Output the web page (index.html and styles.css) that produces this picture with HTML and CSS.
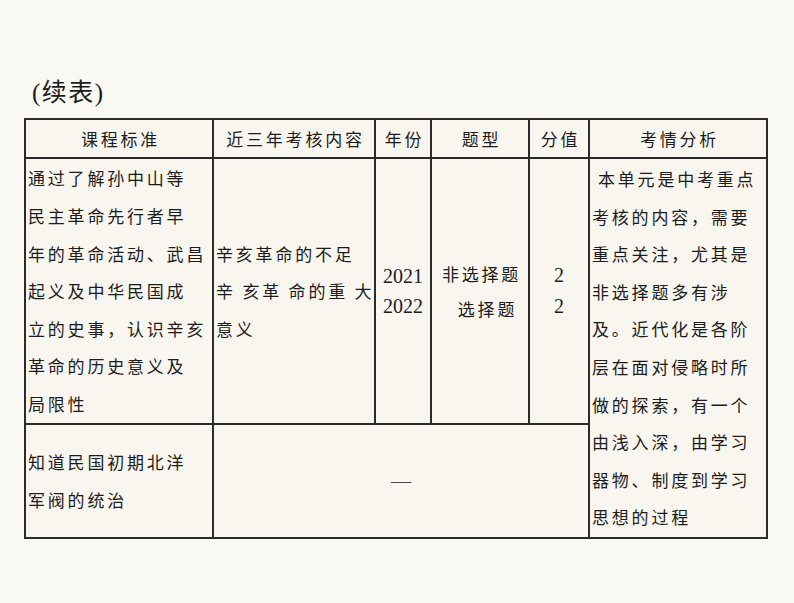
FILE: index.html
```html
<!DOCTYPE html>
<html lang="zh-CN">
<head>
<meta charset="utf-8">
<title>续表</title>
<link rel="stylesheet" href="styles.css">
</head>
<body>
<div class="page">
  <div class="title">(续表)</div>
  <table class="grid">
    <colgroup>
      <col class="c1"><col class="c2"><col class="c3"><col class="c4"><col class="c5"><col class="c6">
    </colgroup>
    <thead>
      <tr class="head">
        <th>课程标准</th>
        <th>近三年考核内容</th>
        <th>年份</th>
        <th>题型</th>
        <th>分值</th>
        <th>考情分析</th>
      </tr>
    </thead>
    <tbody>
      <tr class="row1">
        <td class="txt">通过了解孙中山等<br>民主革命先行者早<br>年的革命活动、武昌<br>起义及中华民国成<br>立的史事，认识辛亥<br>革命的历史意义及<br>局限性</td>
        <td class="txt">辛亥革命的不足<br>辛 亥革 命的重 大<br>意义</td>
        <td class="num">2021<br>2022</td>
        <td class="type"><span>非选择题</span><span class="shift">选择题</span></td>
        <td class="num score">2<br>2</td>
        <td class="txt analysis" rowspan="2"><span class="indent">本单元是中考重点</span><br>考核的内容，需要<br>重点关注，尤其是<br>非选择题多有涉<br>及。近代化是各阶<br>层在面对侵略时所<br>做的探索，有一个<br>由浅入深，由学习<br>器物、制度到学习<br>思想的过程</td>
      </tr>
      <tr class="row2">
        <td class="txt">知道民国初期北洋<br>军阀的统治</td>
        <td class="dash" colspan="4">—</td>
      </tr>
    </tbody>
  </table>
</div>
</body>
</html>
```

FILE: styles.css
```css
html, body {
  margin: 0;
  padding: 0;
  background: #faf8f2;
}

body {
  color: #1c1c1c;
  font-family: "Noto Sans CJK SC", "Liberation Serif", serif;
}

.page {
  padding: 77px 0 0 24px;
}

.title {
  font-family: "Liberation Serif", "Noto Sans CJK SC", serif;
  font-size: 25px;
  line-height: 32px;
  height: 32px;
  padding-left: 8px;
  letter-spacing: 1.5px;
  margin-bottom: 9px;
}

.grid {
  border-collapse: collapse;
  table-layout: fixed;
  width: 744px;
  background: #f8f6ef;
}

.c1 { width: 188px; }
.c2 { width: 162px; }
.c3 { width: 56px; }
.c4 { width: 98px; }
.c5 { width: 60px; }
.c6 { width: 178px; }

.grid th,
.grid td {
  border: 2px solid #2b2b2b;
  padding: 0 2px;
  font-size: 17px;
  font-weight: 400;
  letter-spacing: 2.8px;
  vertical-align: middle;
}

.head th {
  height: 37px;
  text-align: center;
  line-height: 35px;
  padding-left: 5px;
}

.row1 td { height: 264px; }
.row2 td { height: 112px; }

.txt {
  text-align: left;
  line-height: 37.6px;
  white-space: nowrap;
}

.analysis {
  padding-left: 3px;
}

.indent {
  padding-left: 6px;
}

.num {
  font-family: "Liberation Serif", serif;
  font-size: 20px !important;
  letter-spacing: 0 !important;
  text-align: center;
  line-height: 30px;
}

.score {
  line-height: 31px;
}

.type {
  text-align: center;
  line-height: 35px;
  padding-left: 5px !important;
}

.type span {
  display: block;
}

.type .shift {
  padding-left: 12px;
}

.dash {
  font-family: "Liberation Serif", serif;
  font-size: 20px !important;
  letter-spacing: 0 !important;
  text-align: center;
  color: #444;
}
```
